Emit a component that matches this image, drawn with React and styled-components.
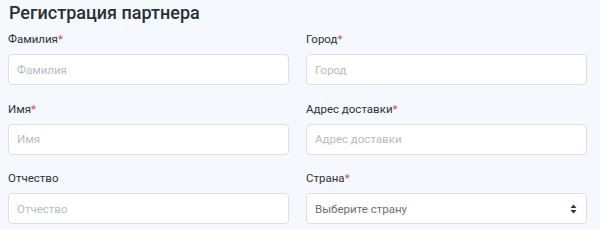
import React from "react";
import styled, { createGlobalStyle } from "styled-components";

const Global = createGlobalStyle`
  html, body { margin: 0; padding: 0; background: #f5f8fc; }
  body { font-family: Roboto, "Noto Sans", sans-serif; }
`;

const Page = styled.div`
  padding: 0 13px 0 8px;
  width: 579px;
`;

const Title = styled.h1`
  margin: 0;
  padding: 2px 0 0 1px;
  font-size: 18px;
  line-height: 22px;
  font-weight: 500;
  color: #2a2e37;
`;

const Grid = styled.div`
  display: grid;
  grid-template-columns: 281px 281px;
  column-gap: 17px;
  row-gap: 16.5px;
  margin-top: 8px;
`;

const Field = styled.div`
  display: flex;
  flex-direction: column;
`;

const Label = styled.label`
  font-size: 11.5px;
  line-height: 14px;
  color: #2e323b;
  margin-bottom: 8px;
`;

const Star = styled.span`
  color: #e0404a;
`;

const Input = styled.input`
  box-sizing: border-box;
  height: 31px;
  width: 100%;
  border: 1px solid #dcdfe4;
  border-radius: 4px;
  background: #fff;
  padding: 0 8px;
  font-family: inherit;
  font-size: 11.5px;
  color: #2e323b;
  outline: none;
  &::placeholder { color: #b8bcc3; }
`;

const SelectBox = styled.div`
  box-sizing: border-box;
  height: 31px;
  border: 1px solid #dcdfe4;
  border-radius: 4px;
  background: #fff;
  padding: 0 9px 0 8px;
  display: flex;
  align-items: center;
  justify-content: space-between;
  font-size: 11.5px;
  color: #6b7078;
`;

const fields = [
  { label: "Фамилия", req: true },
  { label: "Город", req: true },
  { label: "Имя", req: true },
  { label: "Адрес доставки", req: true },
  { label: "Отчество", req: false },
];

export default function App() {
  return (
    <>
      <Global />
      <Page>
        <Title>Регистрация партнера</Title>
        <Grid>
          {fields.map((f) => (
            <Field key={f.label}>
              <Label>
                {f.label}
                {f.req && <Star>*</Star>}
              </Label>
              <Input placeholder={f.label} />
            </Field>
          ))}
          <Field>
            <Label>
              Страна<Star>*</Star>
            </Label>
            <SelectBox>
              <span>Выберите страну</span>
              <svg width="7" height="10" viewBox="0 0 7 10">
                <path d="M3.5 0.5 L6.5 4 H0.5 Z M3.5 9.5 L6.5 6 H0.5 Z" fill="#2e323b" />
              </svg>
            </SelectBox>
          </Field>
        </Grid>
      </Page>
    </>
  );
}
